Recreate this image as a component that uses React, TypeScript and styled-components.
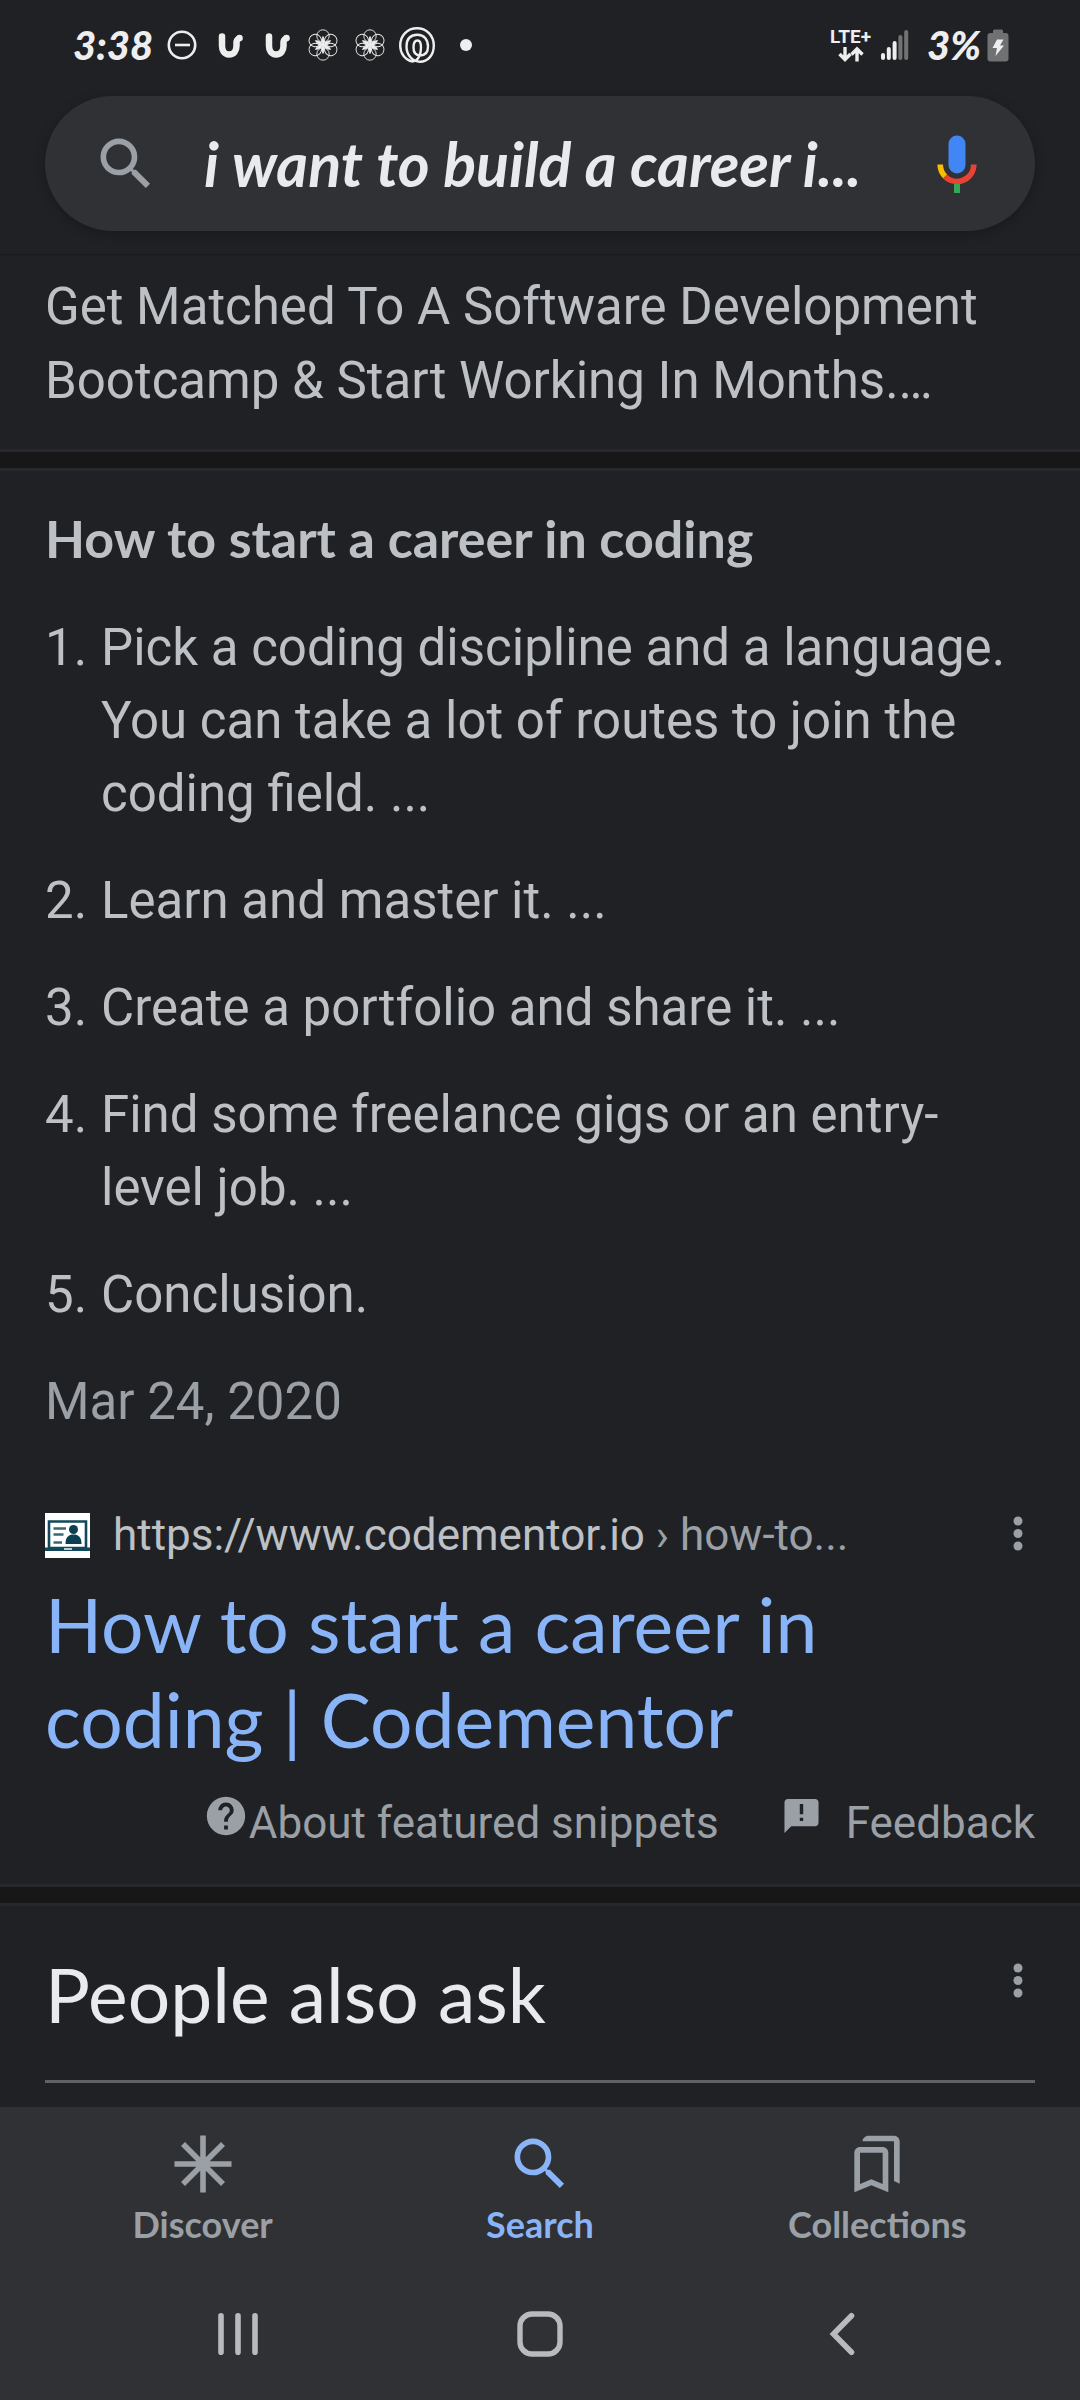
import React from 'react';
import styled, { createGlobalStyle } from 'styled-components';

const body = `Roboto, 'Noto Sans', sans-serif`;
const display = `Lato, 'Open Sans', sans-serif`;

const color = {
  page: '#202124',
  raised: '#303134',
  gap: '#171717',
  edge: '#26282b',
  text: '#bdc1c6',
  bright: '#e8eaed',
  muted: '#9aa0a6',
  link: '#8ab4f8',
  rule: '#5f6368',
};

const GlobalStyle = createGlobalStyle`
  * { box-sizing: border-box; }
  html { background: ${color.page}; }
  body { margin: 0; background: ${color.page}; color: ${color.text}; font-family: ${body}; }
  h2, h3, p, ol { margin: 0; padding: 0; font-weight: 400; }
  button { border: 0; padding: 0; background: none; color: inherit; font: inherit; cursor: pointer; }
  a { color: inherit; text-decoration: none; }
  svg { display: block; flex: none; }
`;

const Screen = styled.div`
  display: flex;
  flex-direction: column;
  min-height: 100vh;
`;

const Header = styled.header`
  padding-bottom: 23px;
  box-shadow: 0 1px 2px rgba(0, 0, 0, 0.25);
`;

const StatusBar = styled.div`
  display: flex;
  justify-content: space-between;
  align-items: center;
  height: 96px;
  padding: 0 71px 6px 73px;
  color: #eeeeee;
`;

const StatusGroup = styled.div<{ $gap: number }>`
  display: flex;
  align-items: center;
  gap: ${(p) => p.$gap}px;
`;

const StatusText = styled.span`
  font: italic 900 40px/48px ${display};
`;

const Clock = styled(StatusText)`
  min-width: 78px;
`;

const Network = styled.span`
  display: flex;
  flex-direction: column;
  align-items: center;
  font: 700 19px/18px ${body};
`;

const SearchBar = styled.form`
  display: flex;
  align-items: center;
  height: 135px;
  margin: 0 45px;
  padding: 0 58px 0 47px;
  border-radius: 68px;
  background: ${color.raised};
  box-shadow: 0 3px 12px rgba(0, 0, 0, 0.25);
`;

const SearchButton = styled.button`
  color: ${color.muted};
`;

const Query = styled.input`
  flex: 1;
  min-width: 0;
  margin: 0 24px 0 44px;
  padding: 0;
  border: 0;
  outline: 0;
  background: none;
  color: ${color.bright};
  font: italic 700 61px/76px ${display};
  text-overflow: ellipsis;
`;

const Card = styled.section`
  padding: 31px 45px;
`;

const AdCard = styled(Card)`
  padding-top: 16px;
`;

const AdText = styled.p`
  font-size: 51px;
  line-height: 74px;
`;

const Divider = styled.div`
  height: 22px;
  border: solid ${color.edge};
  border-width: 3px 0;
  background: ${color.gap};
`;

const SnippetHeading = styled.h2`
  margin: 4px 0 41px;
  font: 700 52px/64px ${display};
`;

const Steps = styled.ol`
  display: grid;
  gap: 34px;
  list-style: none;
  font-size: 51px;
  line-height: 73px;
  counter-reset: step;
`;

const Step = styled.li`
  display: grid;
  grid-template-columns: 56px 1fr;
  counter-increment: step;
  &::before { content: counter(step) '.'; }
`;

const DateLine = styled.p`
  margin-top: 34px;
  color: ${color.muted};
  font-size: 51px;
  line-height: 73px;
`;

const Source = styled.div`
  display: flex;
  align-items: center;
  margin-top: 67px;
  font-size: 44px;
  line-height: 60px;
`;

const SourceUrl = styled.a`
  flex: 1;
  margin-left: 23px;
`;

const Crumb = styled.span`
  color: ${color.muted};
`;

const MoreButton = styled.button`
  color: ${color.muted};
`;

const ResultTitle = styled.h3`
  margin: 12px 0 26px;
  max-width: 860px;
  color: ${color.link};
  font: 400 75px/95px ${display};
`;

const SnippetLinks = styled.div`
  display: flex;
  justify-content: flex-end;
  gap: 62px;
  color: ${color.muted};
  font-size: 44px;
  line-height: 60px;
`;

const IconLink = styled.a<{ $gap: number }>`
  display: flex;
  gap: ${(p) => p.$gap}px;
`;

const AskCard = styled.section`
  padding: 41px 45px 24px;
`;

const AskHeader = styled.div`
  display: flex;
  justify-content: space-between;
  align-items: flex-start;
  padding-bottom: 38px;
  border-bottom: 3px solid ${color.rule};
`;

const AskTitle = styled.h2`
  color: ${color.bright};
  font: 400 75px/95px ${display};
`;

const AskMore = styled(MoreButton)`
  margin-top: 5px;
`;

const Bottom = styled.footer`
  margin-top: auto;
  background: ${color.raised};
`;

const Tabs = styled.nav`
  display: grid;
  grid-template-columns: repeat(3, 1fr);
  height: 160px;
  padding: 23px 34px 0;
`;

const Tab = styled.button<{ $active?: boolean }>`
  display: flex;
  flex-direction: column;
  align-items: center;
  gap: 4px;
  color: ${(p) => (p.$active ? color.link : color.muted)};
  font: 700 36px/44px ${display};
`;

const SystemNav = styled.nav`
  display: grid;
  grid-template-columns: repeat(3, 1fr);
  height: 133px;
  padding: 0 87px;
  color: #b9babb;
`;

const SystemButton = styled.button`
  display: grid;
  place-items: center;
`;

const searchPath =
  'M15.5 14h-.79l-.28-.27A6.47 6.47 0 0 0 16 9.5 6.5 6.5 0 1 0 9.5 16c1.61 0 3.09-.59 4.23-1.57l.27.28v.79l5 4.99L20.49 19l-4.99-5zm-6 0C7.01 14 5 11.99 5 9.5S7.01 5 9.5 5 14 7.01 14 9.5 11.99 14 9.5 14z';

const SearchIcon = ({ size }: { size: number }) => (
  <svg width={size} height={size} viewBox="0 0 24 24" fill="currentColor" aria-hidden="true">
    <path d={searchPath} />
  </svg>
);

const MicIcon = () => (
  <svg width="40" height="58" viewBox="0 0 40 58" fill="none" aria-hidden="true">
    <rect x="11.5" y="0.5" width="17" height="38" rx="8.5" fill="#4285f4" />
    <path d="M3.2 29.5A16.8 16.8 0 0 0 8.1 41.4" stroke="#fbbc04" strokeWidth="5.6" />
    <path d="M8.1 41.4A16.8 16.8 0 0 0 36.8 29.5" stroke="#ea4335" strokeWidth="5.6" />
    <rect x="17" y="49" width="6" height="9" fill="#34a853" />
  </svg>
);

const DndIcon = () => (
  <svg width="36" height="36" viewBox="0 0 36 36" fill="none" stroke="currentColor" strokeWidth="2.6" aria-hidden="true">
    <circle cx="18" cy="18" r="13.2" />
    <path d="M11 18h15" />
  </svg>
);

const HookIcon = () => (
  <svg width="36" height="36" viewBox="0 0 36 36" fill="none" stroke="currentColor" strokeLinecap="round" aria-hidden="true">
    <path d="M11 9.5v9.5c0 4 2 8.5 7 8.5s7.5-4 7.500-8.5v-3.5c0-2 1-3.2 2.500-4" strokeWidth="6.5" strokeLinejoin="round" />
    <circle cx="28.5" cy="11" r="1.5" strokeWidth="3.5" />
  </svg>
);

const petals = [0, 60, 120, 180, 240, 300];

const FlowerIcon = () => (
  <svg width="36" height="36" viewBox="0 0 36 36" fill="none" stroke="currentColor" strokeWidth="0.9" aria-hidden="true">
    {petals.map((a) => (
      <g key={a} transform={`rotate(${a} 18 18)`}>
        <circle cx="18" cy="9" r="6.2" />
        <path d="M18 18C16.400 15 16.600 12 18 9.500C19.400 12 19.600 15 18 18z" fill="currentColor" />
      </g>
    ))}
  </svg>
);

const SpiralIcon = () => (
  <svg width="36" height="36" viewBox="0 0 36 36" fill="none" stroke="currentColor" strokeWidth="2.4" aria-hidden="true">
    <path d="M13 34.500C5.500 32.500 1.200 26 1.200 18.500C1.200 8.500 8.500 1.300 18 1.300S34.800 8.500 34.800 18.500S28.500 34.700 21 34.700S7.500 28 7.500 19.500S12 7.800 18.500 7.800S29 12.500 29 19.500S25.500 28.500 21 28.500S14.500 25 14.500 20.500S16 13.500 18.500 13.500S22 16.500 22 20.500C22 27 19.500 34.500 13 34.500" />
  </svg>
);

const DotIcon = () => (
  <svg width="36" height="36" viewBox="0 0 36 36" fill="currentColor" aria-hidden="true">
    <circle cx="20" cy="18" r="6" />
  </svg>
);

const DataArrows = () => (
  <svg width="26" height="16" viewBox="0 0 26 16" fill="none" stroke="currentColor" strokeWidth="3.4" aria-hidden="true">
    <path d="M7 1v12M1.500 8l5.500 5.500L12.500 8" />
    <path d="M19 15.500V3M13.500 8.500L19 3l5.500 5.500" />
  </svg>
);

const bars = [7, 13, 19, 25, 30];

const SignalIcon = () => (
  <svg width="28" height="31" viewBox="0 0 28 31" fill="currentColor" aria-hidden="true">
    {bars.map((h, i) => (
      <rect key={h} x={i * 5.8} y={30 - h} width="4" height={h} rx="2" opacity={i > 2 ? 0.4 : 1} />
    ))}
  </svg>
);

const BatteryIcon = () => (
  <svg width="22" height="33" viewBox="0 0 22 33" aria-hidden="true">
    <path d="M6 4V2q0-1.500 1.500-1.500h7Q16 .500 16 2v2h2.500q3 0 3 3v22.500q0 3-3 3h-15q-3 0-3-3V7q0-3 3-3z" fill="#707173" />
    <path d="M10 10.500h6.500L13 16.500h4L8.500 27l1.500-8H5.500z" fill="#eeeeee" />
  </svg>
);

const DotsIcon = () => (
  <svg width="34" height="60" viewBox="0 0 34 60" fill="currentColor" aria-hidden="true">
    <circle cx="17" cy="16" r="4.5" />
    <circle cx="17" cy="28.5" r="4.5" />
    <circle cx="17" cy="41" r="4.5" />
  </svg>
);

const Favicon = () => (
  <svg width="45" height="45" viewBox="0 0 45 45" aria-hidden="true">
    <rect width="45" height="45" fill="#fff" />
    <path d="M4 8.500h37V35H4z" fill="none" stroke="#12485a" strokeWidth="2.6" />
    <path d="M0 34.500h45V38H0z" fill="#12485a" />
    <path d="M19 36h8" stroke="#bccdd3" strokeWidth="2" />
    <path d="M8.500 15.500h12.500M8.500 21.500h10M8.500 29.500h8.500" stroke="#3b6674" strokeWidth="2.6" />
    <circle cx="28.5" cy="16.5" r="4.5" fill="#0b4052" />
    <path d="M20.500 31c0-7 3-9.500 8-9.500s8 2.500 8 9.500z" fill="#0b4052" />
  </svg>
);

const HelpIcon = () => (
  <svg width="46" height="46" viewBox="0 0 24 24" fill="currentColor" aria-hidden="true">
    <path d="M12 2C6.480 2 2 6.480 2 12s4.480 10 10 10 10-4.480 10-10S17.520 2 12 2zm1 17h-2v-2h2v2zm2.070-7.750l-.9.920C13.450 12.900 13 13.500 13 15h-2v-.500c0-1.100.450-2.100 1.170-2.830l1.240-1.260c.370-.360.590-.860.590-1.410 0-1.100-.9-2-2-2s-2 .9-2 2H8c0-2.210 1.790-4 4-4s4 1.790 4 4c0 .880-.360 1.680-.930 2.250z" />
  </svg>
);

const FeedbackIcon = () => (
  <svg width="41" height="46" viewBox="0 -1.500 24 27" fill="currentColor" aria-hidden="true">
    <path d="M20 2H4c-1.100 0-1.990.9-1.990 2L2 22l4-4h14c1.100 0 2-.9 2-2V4c0-1.100-.9-2-2-2zm-7 13h-2v-2h2v2zm0-4h-2V5h2z" />
  </svg>
);

const DiscoverIcon = () => (
  <svg width="68" height="68" viewBox="0 0 68 68" stroke="currentColor" strokeWidth="5.6" aria-hidden="true">
    <path d="M34 5.500v57M5.500 34h57M14 14l40 40M54 14L14 54" />
  </svg>
);

const CollectionsIcon = () => (
  <svg width="68" height="68" viewBox="1 0 24 24" fill="currentColor" aria-hidden="true">
    <path d="M19 18l2 1V4c0-1.100-.9-2-2-2H10c-1.100 0-2.100.9-2.100 2H19zM15 6H7c-1.100 0-2 .9-2 2v14l6-2.500 6 2.500V8c0-1.100-.9-2-2-2zm0 13.100l-4-1.700-4 1.700V8h8z" />
  </svg>
);

const RecentsIcon = () => (
  <svg width="42" height="46" viewBox="0 0 42 46" stroke="currentColor" strokeWidth="5.6" strokeLinecap="round" aria-hidden="true">
    <path d="M4 4.800v36.400M21 4.800v36.400M38 4.800v36.400" />
  </svg>
);

const HomeIcon = () => (
  <svg width="46" height="46" viewBox="0 0 46 46" fill="none" stroke="currentColor" strokeWidth="5.4" aria-hidden="true">
    <rect x="3" y="3" width="40" height="40" rx="12" />
  </svg>
);

const BackIcon = () => (
  <svg width="28" height="46" viewBox="0 0 28 46" fill="none" stroke="currentColor" strokeWidth="5.6" strokeLinecap="round" aria-hidden="true">
    <path d="M23.500 4.800L5.500 23l18 18.200" />
  </svg>
);

const steps = [
  'Pick a coding discipline and a language. You can take a lot of routes to join the coding field. ...',
  'Learn and master it. ...',
  'Create a portfolio and share it. ...',
  'Find some freelance gigs or an entry-level job. ...',
  'Conclusion.',
];

export default function App() {
  return (
    <Screen>
      <GlobalStyle />
      <Header>
        <StatusBar>
          <StatusGroup $gap={11}>
            <Clock>3:38</Clock>
            <DndIcon />
            <HookIcon />
            <HookIcon />
            <FlowerIcon />
            <FlowerIcon />
            <SpiralIcon />
            <DotIcon />
          </StatusGroup>
          <StatusGroup $gap={18}>
            <StatusGroup $gap={10}>
              <Network>
                LTE+
                <DataArrows />
              </Network>
              <SignalIcon />
            </StatusGroup>
            <StatusGroup $gap={6}>
              <StatusText>3%</StatusText>
              <BatteryIcon />
            </StatusGroup>
          </StatusGroup>
        </StatusBar>
        <SearchBar role="search" onSubmit={(e) => e.preventDefault()}>
          <SearchButton type="submit" aria-label="Search">
            <SearchIcon size={68} />
          </SearchButton>
          <Query type="text" aria-label="Search query" defaultValue="i want to build a career i..." />
          <button type="button" aria-label="Voice search">
            <MicIcon />
          </button>
        </SearchBar>
      </Header>

      <main>
        <AdCard>
          <AdText>Get Matched To A Software Development Bootcamp &amp; Start Working In Months.…</AdText>
        </AdCard>
        <Divider />
        <Card>
          <SnippetHeading>How to start a career in coding</SnippetHeading>
          <Steps>
            {steps.map((s) => (
              <Step key={s}>{s}</Step>
            ))}
          </Steps>
          <DateLine>Mar 24, 2020</DateLine>
          <Source>
            <Favicon />
            <SourceUrl href="#result">
              https://www.codementor.io <Crumb>› how-to...</Crumb>
            </SourceUrl>
            <MoreButton type="button" aria-label="More about this result">
              <DotsIcon />
            </MoreButton>
          </Source>
          <ResultTitle>
            <a href="#result">How to start a career in coding | Codementor</a>
          </ResultTitle>
          <SnippetLinks>
            <IconLink href="#about" $gap={0}>
              <HelpIcon />
              About featured snippets
            </IconLink>
            <IconLink href="#feedback" $gap={24}>
              <FeedbackIcon />
              Feedback
            </IconLink>
          </SnippetLinks>
        </Card>
        <Divider />
        <AskCard>
          <AskHeader>
            <AskTitle>People also ask</AskTitle>
            <AskMore type="button" aria-label="More about People also ask">
              <DotsIcon />
            </AskMore>
          </AskHeader>
        </AskCard>
      </main>

      <Bottom>
        <Tabs>
          <Tab type="button">
            <DiscoverIcon />
            Discover
          </Tab>
          <Tab type="button" $active>
            <SearchIcon size={68} />
            Search
          </Tab>
          <Tab type="button">
            <CollectionsIcon />
            Collections
          </Tab>
        </Tabs>
        <SystemNav>
          <SystemButton type="button" aria-label="Recent apps">
            <RecentsIcon />
          </SystemButton>
          <SystemButton type="button" aria-label="Home">
            <HomeIcon />
          </SystemButton>
          <SystemButton type="button" aria-label="Back">
            <BackIcon />
          </SystemButton>
        </SystemNav>
      </Bottom>
    </Screen>
  );
}
